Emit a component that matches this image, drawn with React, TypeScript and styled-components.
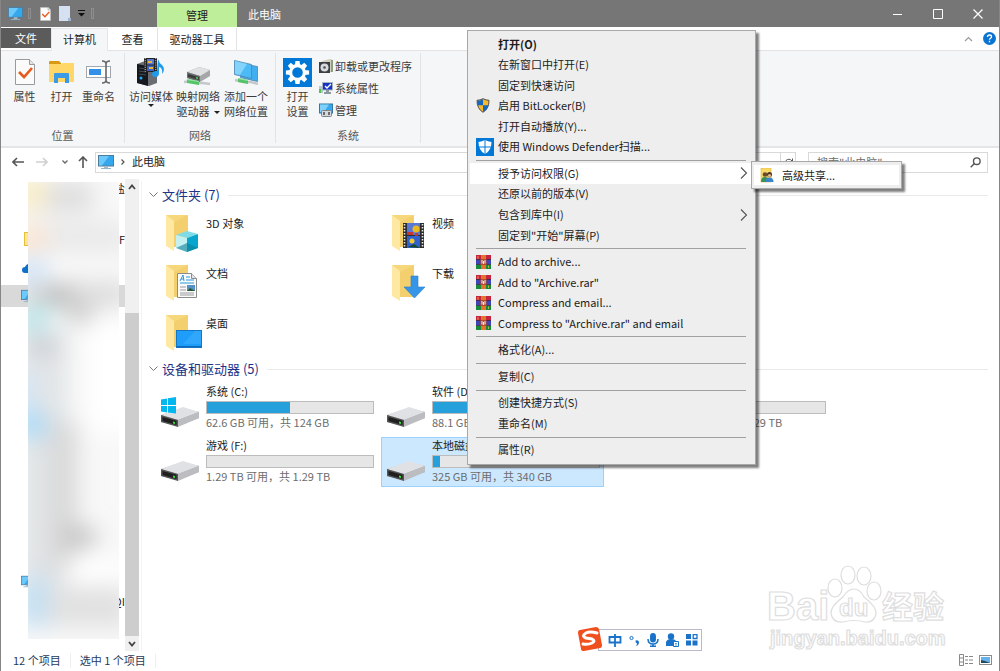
import React from "react";
import styled, { createGlobalStyle, css } from "styled-components";

const Global = createGlobalStyle`
  * { box-sizing: border-box; }
  html, body { margin: 0; padding: 0; background: #fff; }
  body, button, input { font-family: "Noto Sans CJK SC", sans-serif; font-size: 11px; line-height: 15px; color: #1b1b1b; }
  button { border: 0; background: none; padding: 0; margin: 0; white-space: nowrap; }
  svg { display: block; flex: none; }
  ul { list-style: none; margin: 0; padding: 0; }
`;

/* ---------- shell ---------- */
const Window = styled.div`
  position: relative;
  min-height: 100vh;
  display: flex;
  flex-direction: column;
  border: 1px solid #868686;
  border-top: 0;
  overflow: hidden;
`;
const TitleBar = styled.header`
  height: 27px;
  background: #767676;
  display: flex;
  align-items: stretch;
`;
const QuickAccess = styled.div`
  width: 156px;
  padding-left: 7px;
  display: flex;
  align-items: center;
  gap: 5px;
`;
const QuickDivider = styled.span`
  width: 3px;
  height: 11px;
  border: 1px solid #8f8f8f;
`;
const IconButton = styled.button<{ $w?: number }>`
  width: ${(p) => p.$w ?? 16}px;
  display: flex;
  align-items: center;
  justify-content: center;
`;
const ContextTab = styled.div`
  width: 80px;
  margin-top: 3px;
  padding-top: 1px;
  background: #bfee9a;
  display: flex;
  align-items: center;
  justify-content: center;
`;
const Title = styled.h1`
  margin: 0 auto 0 11px;
  font-size: 11px;
  line-height: 28px;
  font-weight: 400;
  color: #fff;
`;
const WindowButtons = styled.div`
  display: flex;
  padding-right: 1px;
`;

const TabRow = styled.nav`
  height: 24px;
  display: flex;
  align-items: stretch;
  border-bottom: 1px solid #e2e3e4;
`;
const Tab = styled.button<{ $kind?: "file" | "active" | "context"; $w: number }>`
  width: ${(p) => p.$w}px;
  height: 22px;
  margin-top: 1px;
  ${(p) => p.$kind === "file" && css`height: 20px; background: #5b5b5b; color: #fff;`}
  ${(p) =>
    p.$kind === "active" &&
    css`height: 24px; margin-bottom: -1px; padding-bottom: 2px; background: #f5f6f7; border: 1px solid #e6e7e8; border-bottom: 0;`}
  ${(p) => p.$kind === "context" && css`border: solid #e3e3e3; border-width: 0 1px;`}
`;
const TabTools = styled.div`
  margin-left: auto;
  display: flex;
  align-items: center;
  gap: 9px;
  padding-right: 3px;
`;

const Ribbon = styled.section`
  height: 97px;
  background: #f5f6f7;
  border-bottom: 2px solid #e4e5e7;
  display: flex;
  padding: 2px 0 3px;
`;
const RibbonGroup = styled.div<{ $w: number }>`
  width: ${(p) => p.$w}px;
  border-right: 1px solid #e2e3e4;
  display: flex;
  flex-direction: column;
  justify-content: space-between;
`;
const RibbonBody = styled.div<{ $left: number }>`
  display: flex;
  align-items: flex-start;
  padding: 4px 0 0 ${(p) => p.$left}px;
`;
const GroupLabel = styled.div`
  text-align: center;
  color: #5a5a5a;
`;
const BigButton = styled.button<{ $w: number }>`
  width: ${(p) => p.$w}px;
  display: flex;
  flex-direction: column;
  align-items: center;
  gap: 2px;
  color: #3c3c3c;
`;
const BigIcon = styled.span`
  height: 30px;
  display: flex;
  align-items: center;
`;
const BigText = styled.span`
  display: flex;
  flex-direction: column;
  align-items: center;
`;
const Caret = styled.i<{ $inline?: boolean }>`
  display: inline-block;
  border: 3px solid transparent;
  border-top-color: #222;
  border-bottom: 0;
  ${(p) => (p.$inline ? "margin: 0 0 2px 4px; vertical-align: middle;" : "")}
`;
const SmallList = styled.div`
  display: flex;
  flex-direction: column;
  gap: 4px;
  padding: 0 0 0 7px;
`;
const SmallButton = styled.button`
  height: 18px;
  display: flex;
  align-items: center;
  gap: 2px;
  color: #3c3c3c;
`;

const AddressRow = styled.div`
  height: 33px;
  display: flex;
  align-items: center;
  padding: 0 11px 5px 9px;
`;
const NavButtons = styled.div`
  width: 85px;
  display: flex;
  justify-content: space-between;
  align-items: center;
  padding-right: 2px;
`;
const AddressBox = styled.div`
  flex: 1;
  height: 21px;
  border: 1px solid #d9d9d9;
  display: flex;
  align-items: stretch;
`;
const Crumb = styled.div`
  flex: 1;
  display: flex;
  align-items: center;
  gap: 7px;
  padding: 0 0 1px 2px;
`;
const AddressButton = styled.button`
  width: 15px;
  border-left: 1px solid #d9d9d9;
  display: flex;
  align-items: center;
  justify-content: center;
`;
const SearchBox = styled.label`
  width: 180px;
  height: 21px;
  margin-left: 12px;
  border: 1px solid #d9d9d9;
  display: flex;
  align-items: center;
  padding: 0 6px 0 8px;
  input { flex: 1; min-width: 0; border: 0; padding: 0; outline: 0; background: none; }
  input::placeholder { color: #6d6d6d; }
`;

/* ---------- body ---------- */
const Body = styled.div`
  flex: 1;
  display: flex;
  min-height: 470px;
`;
const Sidebar = styled.aside`
  position: relative;
  width: 124px;
  overflow: hidden;
`;
const Tree = styled.ul`
  display: flex;
  flex-direction: column;
`;
const TreeItem = styled.li<{ $selected?: boolean; $h: number }>`
  height: ${(p) => p.$h}px;
  display: flex;
  align-items: center;
  justify-content: space-between;
  padding-left: 20px;
  background: ${(p) => (p.$selected ? "#d9d9d9" : "transparent")};
`;
const Mosaic = styled.div`
  position: absolute;
  left: 27px;
  top: 1px;
  bottom: 12px;
  width: 91px;
  overflow: hidden;
  svg { width: 100%; height: 100%; }
`;
const Scrollbar = styled.div`
  width: 14px;
  display: flex;
  flex-direction: column;
  background: #f0f0f0;
  margin-top: -2px;
  button { height: 15px; display: flex; align-items: center; justify-content: center; }
`;
const Thumb = styled.div`
  flex: 1;
  margin-top: 119px;
  background: #cdcdcd;
`;
const Content = styled.main`
  flex: 1;
  min-width: 0;
  margin-left: 2px;
  border-left: 1px solid #f3f3f3;
  padding: 0 11px 0 7px;
`;
const Group = styled.section`
  padding-top: 2px;
`;
const GroupHead = styled.h2`
  height: 24px;
  margin: 0 0 2px;
  display: flex;
  align-items: center;
  gap: 4px;
  font-size: 13px;
  line-height: 20px;
  font-weight: 400;
  color: #1e3287;
  &::after { content: ""; flex: 1; height: 1px; margin: 0 0 0 4px; background: #e9e9e9; }
`;
const Grid = styled.ul`
  display: grid;
  grid-template-columns: repeat(auto-fill, 223px);
  gap: 4px 3px;
  padding-left: 6px;
`;
const FolderTile = styled.li`
  height: 46px;
  padding: 5px 0 0 10px;
  display: flex;
  gap: 3px;
  span { padding-top: 2px; }
`;
const DriveTile = styled.li<{ $selected?: boolean }>`
  height: 50px;
  padding: 0 3px 0 5px;
  display: flex;
  gap: 6px;
  border: 1px solid ${(p) => (p.$selected ? "#99d1ff" : "transparent")};
  background: ${(p) => (p.$selected ? "#cce8ff" : "transparent")};
`;
const DriveInfo = styled.div`
  flex: 1;
  min-width: 0;
  white-space: nowrap;
`;
const Bar = styled.div`
  width: 168px;
  height: 13px;
  margin: 2px 0 1px;
  border: 1px solid #bcbcbc;
  background: #e6e6e6;
`;
const Fill = styled.div`
  height: 100%;
  background: #26a0da;
`;
const Muted = styled.div`
  color: #6d6d6d;
`;

const StatusBar = styled.footer`
  height: 20px;
  display: flex;
  align-items: center;
  padding: 0 7px 2px 12px;
  color: #1e395b;
`;
const StatusText = styled.span`
  padding-right: 9px;
  margin-right: 9px;
  border-right: 1px solid #f0f0f0;
`;
const ViewButtons = styled.div`
  margin-left: auto;
  display: flex;
  gap: 6px;
`;

/* ---------- floating layers ---------- */
const popup = css`
  position: absolute;
  display: flex;
  flex-direction: column;
  border: 1px solid #a8a8a8;
  background: #eeeeee;
  box-shadow: 3px 3px 2px rgba(0, 0, 0, 0.5);
`;
const ContextMenu = styled.div`
  ${popup}
  left: 466px;
  top: 30px;
  width: 289px;
  height: 435px;
  padding: 3px 2px 4px;
`;
const SubMenu = styled.div`
  ${popup}
  left: 750px;
  top: 161px;
  width: 151px;
  padding: 3px 2px;
`;
const MenuItem = styled.button<{ $active?: boolean; $bold?: boolean }>`
  flex: 1 1 20px;
  min-height: 20px;
  display: grid;
  grid-template-columns: 28px 1fr 13px;
  align-items: center;
  text-align: left;
  font-weight: ${(p) => (p.$bold ? 700 : 400)};
  background: ${(p) => (p.$active ? "#fff" : "transparent")};
`;
const MenuIcon = styled.span`
  display: flex;
  padding-left: 6px;
  height: 18px;
  align-items: center;
`;
const Rule = styled.hr`
  width: auto;
  height: 1px;
  border: 0;
  margin: 3px 7px 2px 6px;
  background: #a0a0a0;
`;
const ImeBar = styled.div`
  position: absolute;
  left: 597px;
  top: 629px;
  width: 104px;
  height: 22px;
  border: 1px solid #b9bcc8;
  background: #fff;
  display: flex;
  align-items: center;
  justify-content: space-between;
  padding: 0 3px 0 9px;
  color: #1a73c8;
`;
const ImeLogo = styled.div`
  position: absolute;
  left: -23px;
  top: -4px;
`;
const Watermark = styled.div`
  position: absolute;
  right: 48px;
  bottom: 14px;
`;

/* ---------- icons ---------- */
const Monitor = ({ w = 16 }: { w?: number }) => (
  <svg width={w} height={w} viewBox="0 0 16 16">
    <rect x="0.5" y="1.5" width="15" height="10.5" fill="#35a7ec" stroke="#4e7d9c" />
    <path d="M1 2h10L4 11.5H1z" fill="#6cc9fb" />
    <path d="M6 12h4v2H6z" fill="#a9bac5" />
    <path d="M3 14h10v1H3z" fill="#8fb4cb" />
  </svg>
);
const CheckDoc = ({ w, h }: { w: number; h: number }) => (
  <svg width={w} height={h} viewBox="0 0 20 26" preserveAspectRatio="none">
    <path d="M.5.5h14l5 5v20H.5z" fill="#fbfbfb" stroke="#9a9a9a" />
    <path d="M14.500 .5v5h5" fill="#e4e4e4" stroke="#9a9a9a" />
    <path d="M4 13l5 5 8-9" fill="none" stroke="#e8591c" strokeWidth="2.600" />
  </svg>
);
const OpenFolder = () => (
  <svg width="26" height="26" viewBox="0 0 26 26">
    <path d="M0 3q0-1 1-1h9l2 2v2H0z" fill="#d79a12" />
    <path d="M0 5h12l2-1h11v19H0z" fill="#ffd766" />
    <path d="M5 24v-9q0-1 1-1h13q1 0 1 1v9h-4v-5H9v5z" fill="#3c9be6" />
  </svg>
);
const RenameIcon = () => (
  <svg width="26" height="26" viewBox="0 0 26 26" fill="none">
    <rect x=".5" y="7.500" width="24" height="11" fill="#fff" stroke="#a0a7ae" />
    <rect x="3" y="10" width="12" height="6" fill="#3390e8" />
    <path d="M16 2q4 0 4 3v16q0 3-4 3M24 2q-4 0-4 3v16q0 3 4 3" stroke="#666" strokeWidth="1.600" />
  </svg>
);
const MediaIcon = () => (
  <svg width="28" height="28" viewBox="0 0 28 28">
    <path d="M0 6l8-3 12 2v20l-8 3L0 25z" fill="#6a6d72" />
    <path d="M0 6l11 2v20L0 25z" fill="#15181c" />
    <path d="M2 10l7 1M2 13l7 1M2 16l7 1" stroke="#454a52" />
    <circle cx="4" cy="20" r="1.500" fill="#27a5f5" />
    <rect x="7" y="0" width="13" height="14" fill="#222" />
    <path d="M8.200 0v14M18.800 0v14" stroke="#ddd" strokeDasharray="1 1.200" />
    <rect x="10" y="1" width="7" height="5.500" fill="#5a77d6" />
    <rect x="10" y="7.500" width="7" height="5.500" fill="#3b62c8" />
    <path d="M11 3h4v2h-4zM12 9h4v2h-4z" fill="#e9b62f" />
    <path d="M21 1q1 4 4 6 4 4 0 9 1-6-3-7v6q0 4-3.500 4-3.500 0-3.500-3t5-3z" fill="#1f9bea" />
  </svg>
);
const NetDriveIcon = () => (
  <svg width="28" height="28" viewBox="0 0 28 28">
    <path d="M0 24l8-1 4 2h7l7 1" stroke="#c3c8cb" strokeWidth="2.400" fill="none" />
    <path d="M3 14L15 9l11 3v6l-10 6-13-4z" fill="#a4a6a8" />
    <path d="M3 14L15 9l11 3-10 6z" fill="#dfe1e2" />
    <path d="M3 14l13 4v6L3 20z" fill="#6d7072" />
    <path d="M4 16l11 3v3L4 19z" fill="#3a3c3e" />
    <path d="M12 19l2 .6v1.400l-2-.6z" fill="#4be04b" />
    <path d="M3 21l12 2v4L3 25z" fill="#55c468" />
    <path d="M3 21l12 2v1L3 22z" fill="#9be3a6" />
  </svg>
);
const AddPlaceIcon = () => (
  <svg width="26" height="26" viewBox="0 0 26 26">
    <path d="M2 21l8 2h8l7 2" stroke="#c3c8cb" strokeWidth="2.400" fill="none" />
    <path d="M7.500 4.500l17 3v15l-17-4z" fill="#41aef0" stroke="#4b86ae" strokeWidth=".8" />
    <path d="M1.500 1.500l17 4v14l-17-4z" fill="#4dbaf8" stroke="#4b86ae" strokeWidth=".8" />
    <path d="M2 2l12 3-7 11-5-1.200z" fill="#83d3fb" />
    <path d="M5 19l10 2v4L5 23z" fill="#55c468" />
    <path d="M5 19l10 2v1L5 20z" fill="#9be3a6" />
  </svg>
);
const Gear = () => {
  const teeth = [0, 45, 90, 135, 180, 225, 270, 315];
  return (
    <svg width="29" height="29" viewBox="0 0 28 28">
      <rect width="28" height="28" fill="#0078d7" />
      <g transform="translate(14 14)" fill="#fff">
        {teeth.map((a) => (
          <path key={a} d="M-2.500 -7L-2 -11.200h4l.5 4.200z" transform={`rotate(${a})`} />
        ))}
        <circle r="6.600" fill="none" stroke="#fff" strokeWidth="3" />
      </g>
    </svg>
  );
};
const ProgramsIcon = () => (
  <svg width="14" height="14" viewBox="0 0 14 14">
    <path d="M3 2l8-2 3 1v12H3z" fill="#d3cfc0" />
    <path d="M12 1h2v12h-2z" fill="#8aa27b" />
    <rect x="0" y="3" width="11" height="11" fill="#3c3f42" />
    <circle cx="5.500" cy="8.500" r="4" fill="#d7dadc" />
    <circle cx="5.500" cy="8.500" r="1.300" fill="#4a4d50" />
  </svg>
);
const SystemIcon = () => (
  <svg width="14" height="14" viewBox="0 0 14 14">
    <path d="M0 5h4v7H0z" fill="#b6c5cf" />
    <path d="M0 8h2v4H0z" fill="#56c04d" />
    <rect x="3.500" y="1.500" width="10" height="7.500" fill="#1632c8" stroke="#a8b4be" />
    <path d="M6 5l2 2 4-4" stroke="#fff" fill="none" strokeWidth="1.400" />
    <path d="M7 9h3v2h2v2H5v-2h2z" fill="#8d979e" />
  </svg>
);
const ManageIcon = () => (
  <svg width="14" height="14" viewBox="0 0 14 14">
    <rect x=".5" y="1" width="13" height="9" fill="#36a8ef" stroke="#35789f" />
    <path d="M1 1.500h9L5 9H1z" fill="#7fd0fa" />
    <rect x="2.500" y="7.500" width="10" height="6" rx="1" fill="#d3d8dc" stroke="#7d858b" />
    <path d="M5 9v3M10 9v3" stroke="#333" strokeWidth="1.300" />
  </svg>
);
const FolderIcon = ({ children }: { children?: React.ReactNode }) => (
  <svg width="38" height="40" viewBox="0 0 38 40">
    <path d="M1 1h22v32l-14 0z" fill="#f6d77c" />
    <path d="M9 8L23 1v32H9z" fill="#f3cf6d" />
    <path d="M1 1l8 6v30l-8-5z" fill="#ffe8a2" />
    {children}
  </svg>
);
const Cube = () => (
  <g>
    <path d="M11 21l11-4 11 3-11 4z" fill="#7edce6" />
    <path d="M11 21l11 3v14l-11-4z" fill="#c5f0f2" />
    <path d="M22 24l11-4v14l-11 4z" fill="#08a5cf" />
    <path d="M11 34l11-5 11 5-11 4z" fill="#0a7f96" opacity=".6" />
  </g>
);
const FilmArt = () => (
  <g>
    <rect x="12" y="9" width="21" height="25" fill="#2c2c2c" />
    <path d="M13.500 10v24M31.500 10v24" stroke="#e8e8e8" strokeWidth="1.600" strokeDasharray="1.500 1.500" />
    <rect x="16" y="9" width="13" height="12" fill="#5878d8" />
    <rect x="16" y="22" width="13" height="12" fill="#2f62cf" />
    <circle cx="25" cy="15" r="3.500" fill="#e9b91f" />
    <path d="M24 19h3v3h-3zM16 18h6v3h-6z" fill="#c6362f" />
    <circle cx="21" cy="27" r="2.500" fill="#f0cc30" />
    <path d="M17 33l6-3 6 4z" fill="#184a2c" />
  </g>
);
const PaperArt = () => (
  <g>
    <path d="M12.500 9.500h14l5 5v19h-19z" fill="#fafafa" stroke="#8c8c8c" />
    <path d="M26.500 9.500v5h5" fill="#e2e2e2" stroke="#8c8c8c" />
    <path d="M15 17l3-6 1 6M16 15h3M21 13h4M21 16h8M15 19h14" stroke="#2a9ad8" fill="none" />
    <path d="M15 23h6M15 26h6M15 29h14M15 31h14" stroke="#9a9a9a" />
    <rect x="22" y="21" width="8" height="6" fill="#5591c8" />
    <path d="M22 27l3-3 5 3z" fill="#27582f" />
  </g>
);
const ArrowArt = () => <path d="M20 12h7v11h7L23.500 34 13 23h7z" fill="#3795e8" stroke="#2a7fce" strokeWidth=".6" />;
const DesktopArt = () => (
  <g>
    <rect x="11.500" y="16.500" width="25" height="17" fill="#1e9dfa" stroke="#1476c4" />
    <path d="M30 17h6v13h-18z" fill="#3caeff" opacity=".6" />
    <path d="M12 32.500h24" stroke="#0e68b4" />
  </g>
);
const NoteArt = () => <path d="M21 13l11 3v4l-8-2v12q0 4-4 4t-4-3q0-4 5-4z" fill="#1f9bea" />;
const PictureArt = () => (
  <g>
    <rect x="11.500" y="14.500" width="23" height="18" fill="#8cc9f3" stroke="#e5e5e5" />
    <path d="M12 32l8-9 6 5 3-2 5 6z" fill="#2f7e55" />
  </g>
);
const DriveIcon = ({ system }: { system?: boolean }) => (
  <svg width="39" height="46" viewBox="0 0 39 46">
    <path d="M0 31l22-7 16 4v6L17 42 0 38z" fill="#a9abad" />
    <path d="M0 31l22-8 16 5-21 8z" fill="#e0e1e4" />
    <path d="M17 36l21-8v6L17 43z" fill="#bbbdc0" />
    <path d="M0 31l17 5v7L0 38z" fill="#555" />
    <path d="M1.500 33l14 3.800v4.200l-14-4z" fill="#1f1f1f" />
    <path d="M12 37.500l2 .5v2l-2-.5z" fill="#38e338" />
    {system && (
      <path d="M0 15.500l6-1v6.500H0zM7 14.300l8-1.300v8H7zM0 22h6v6.500l-6-1zM7 22h8v7.500l-8-1z" fill="#00b7f0" />
    )}
  </svg>
);
const Shield = () => (
  <svg width="14" height="15" viewBox="0 0 14 15">
    <path d="M7 .7q3 1.600 6 1.600 0 8.500-6 12-6-3.500-6-12 3 0 6-1.600z" fill="#f7b92c" stroke="#4d4d4d" />
    <path d="M7 1.200v6H1.400q-.2-2-.1-4.500 3 0 5.700-1.500zM7 7.200h5.600q-1 4.500-5.600 6.600z" fill="#1566bd" />
  </svg>
);
const Defender = () => (
  <svg width="18" height="18" viewBox="0 0 18 18">
    <rect width="18" height="18" fill="#0078d7" />
    <path d="M9 2q3 1.800 6.500 1.900 0 8.500-6.500 12.100Q2.500 12.400 2.500 3.900 6 3.800 9 2z" fill="#fff" />
    <path d="M9 2v14M2.500 9h13" stroke="#0078d7" />
  </svg>
);
const Rar = () => (
  <svg width="15" height="14" viewBox="0 0 15 14">
    <rect width="15" height="5" fill="#c4243f" />
    <rect y="4.500" width="15" height="5" fill="#3d46b4" />
    <rect y="9.500" width="15" height="4.500" fill="#16893b" />
    <path d="M0 4.500h15M0 9.500h15" stroke="#33203a" strokeWidth=".7" />
    <rect x="5" width="5" height="14" fill="#e2742c" />
    <rect x="4.500" y="4" width="6" height="6" fill="#b9482a" />
    <path d="M6 5v3.500M7.500 6v3M9 5v3.500" stroke="#fff" strokeWidth=".9" />
    <path d="M2 1v3M12.500 10.500V13" stroke="#f3c94f" strokeWidth=".7" />
  </svg>
);
const ShareIcon = () => (
  <svg width="14" height="15" viewBox="0 0 14 15">
    <rect x="1" width="10" height="14" fill="#f8d966" stroke="#dfb640" strokeWidth=".6" />
    <circle cx="5" cy="6.500" r="2.300" fill="#6a4a2c" />
    <path d="M1 14q0-5 4-5t4 5z" fill="#3c8f55" />
    <circle cx="9.500" cy="6.500" r="2.500" fill="#4a3524" />
    <circle cx="9.500" cy="7.500" r="1.600" fill="#e7b888" />
    <path d="M5.500 14q0-4.500 4-4.500t4 4.500z" fill="#3a85cf" />
  </svg>
);
const Chevron = ({ d, w, h, color, sw = 1 }: { d: string; w: number; h: number; color: string; sw?: number }) => (
  <svg width={w} height={h} viewBox={`0 0 ${w} ${h}`} fill="none" stroke={color} strokeWidth={sw}>
    <path d={d} />
  </svg>
);

/* ---------- data ---------- */
const folders = [
  { name: "3D 对象", art: <Cube /> },
  { name: "视频", art: <FilmArt /> },
  { name: "图片", art: <PictureArt /> },
  { name: "文档", art: <PaperArt /> },
  { name: "下载", art: <ArrowArt /> },
  { name: "音乐", art: <NoteArt /> },
  { name: "桌面", art: <DesktopArt /> },
];
const drives = [
  { name: "系统 (C:)", used: 50, info: "62.6 GB 可用，共 124 GB", system: true },
  { name: "软件 (D:)", used: 40, info: "88.1 GB 可用，共 146 GB" },
  { name: "文件 (E:)", used: 0, info: "1.29 TB 可用，共 1.29 TB" },
  { name: "游戏 (F:)", used: 0, info: "1.29 TB 可用，共 1.29 TB" },
  { name: "本地磁盘 (G:)", used: 4, info: "325 GB 可用，共 340 GB", selected: true },
];
type Entry = { label: string; icon?: React.ReactNode; bold?: boolean; sub?: boolean; active?: boolean } | "rule";
const menu: Entry[] = [
  { label: "打开(O)", bold: true },
  { label: "在新窗口中打开(E)" },
  { label: "固定到快速访问" },
  { label: "启用 BitLocker(B)", icon: <Shield /> },
  { label: "打开自动播放(Y)..." },
  { label: "使用 Windows Defender扫描...", icon: <Defender /> },
  "rule",
  { label: "授予访问权限(G)", sub: true, active: true },
  { label: "还原以前的版本(V)" },
  { label: "包含到库中(I)", sub: true },
  { label: "固定到\"开始\"屏幕(P)" },
  "rule",
  { label: "Add to archive...", icon: <Rar /> },
  { label: "Add to \"Archive.rar\"", icon: <Rar /> },
  { label: "Compress and email...", icon: <Rar /> },
  { label: "Compress to \"Archive.rar\" and email", icon: <Rar /> },
  "rule",
  { label: "格式化(A)..." },
  "rule",
  { label: "复制(C)" },
  "rule",
  { label: "创建快捷方式(S)" },
  { label: "重命名(M)" },
  "rule",
  { label: "属性(R)" },
];

export default function App() {
  return (
    <>
      <Global />
      <Window>
        <TitleBar>
          <QuickAccess>
            <Monitor w={15} />
            <QuickDivider />
            <IconButton aria-label="属性" $w={18}><CheckDoc w={11} h={14} /></IconButton>
            <IconButton aria-label="新建文件夹" $w={12}>
              <svg width="12" height="15" viewBox="0 0 12 15">
                <path d="M0 0h11v12l-2 3H0z" fill="#d5e1f1" />
                <path d="M9 12h3v3H9z" fill="#9fb4d0" />
              </svg>
            </IconButton>
            <IconButton aria-label="自定义快速访问工具栏" $w={10}>
              <svg width="7" height="7" viewBox="0 0 7 7"><path d="M0 0h7v1H0zM0 3h7L3.500 6.500z" fill="#111" /></svg>
            </IconButton>
            <QuickDivider />
          </QuickAccess>
          <ContextTab>管理</ContextTab>
          <Title>此电脑</Title>
          <WindowButtons>
            <IconButton aria-label="最小化" $w={40}>
              <Chevron w={10} h={10} d="M0 5.500h9" color="#fff" />
            </IconButton>
            <IconButton aria-label="最大化" $w={40}>
              <Chevron w={10} h={10} d="M.5 .5h9v9h-9z" color="#fff" />
            </IconButton>
            <IconButton aria-label="关闭" $w={40}>
              <Chevron w={10} h={10} d="M.5 .5l9 9M9.500 .5l-9 9" color="#fff" sw={1.2} />
            </IconButton>
          </WindowButtons>
        </TitleBar>

        <TabRow>
          <Tab $w={50} $kind="file">文件</Tab>
          <Tab $w={57} $kind="active">计算机</Tab>
          <Tab $w={49}>查看</Tab>
          <Tab $w={80} $kind="context">驱动器工具</Tab>
          <TabTools>
            <IconButton aria-label="折叠功能区" $w={10}>
              <Chevron w={9} h={6} d="M1 5l3.500-3.500L8 5" color="#9a9a9a" sw={1.2} />
            </IconButton>
            <IconButton aria-label="帮助" $w={14}>
              <svg width="13" height="13" viewBox="0 0 13 13">
                <circle cx="6.500" cy="6.500" r="6.500" fill="#0a74d0" />
                <path d="M4.500 5q0-2 2-2t2 1.700q0 1-1 1.600t-1 1.400M6.500 8.800v1.400" stroke="#fff" strokeWidth="1.300" fill="none" />
              </svg>
            </IconButton>
          </TabTools>
        </TabRow>

        <Ribbon>
          <RibbonGroup $w={124}>
            <RibbonBody $left={5}>
              <BigButton $w={37}><BigIcon><CheckDoc w={20} h={26} /></BigIcon>属性</BigButton>
              <BigButton $w={37}><BigIcon><OpenFolder /></BigIcon>打开</BigButton>
              <BigButton $w={37}><BigIcon><RenameIcon /></BigIcon>重命名</BigButton>
            </RibbonBody>
            <GroupLabel>位置</GroupLabel>
          </RibbonGroup>
          <RibbonGroup $w={151}>
            <RibbonBody $left={3}>
              <BigButton $w={46}>
                <BigIcon><MediaIcon /></BigIcon>
                <BigText>访问媒体<Caret /></BigText>
              </BigButton>
              <BigButton $w={48}>
                <BigIcon><NetDriveIcon /></BigIcon>
                <BigText><span>映射网络</span><span>驱动器<Caret $inline /></span></BigText>
              </BigButton>
              <BigButton $w={48}>
                <BigIcon><AddPlaceIcon /></BigIcon>
                <BigText><span>添加一个</span><span>网络位置</span></BigText>
              </BigButton>
            </RibbonBody>
            <GroupLabel>网络</GroupLabel>
          </RibbonGroup>
          <RibbonGroup $w={145}>
            <RibbonBody $left={7}>
              <BigButton $w={29}>
                <BigIcon><Gear /></BigIcon>
                <BigText><span>打开</span><span>设置</span></BigText>
              </BigButton>
              <SmallList>
                <SmallButton><ProgramsIcon />卸载或更改程序</SmallButton>
                <SmallButton><SystemIcon />系统属性</SmallButton>
                <SmallButton><ManageIcon />管理</SmallButton>
              </SmallList>
            </RibbonBody>
            <GroupLabel>系统</GroupLabel>
          </RibbonGroup>
        </Ribbon>

        <AddressRow>
          <NavButtons>
            <IconButton aria-label="后退"><Chevron w={12} h={10} d="M1 5h11M5 1L1 5l4 4" color="#555" sw={1.6} /></IconButton>
            <IconButton aria-label="前进" $w={28}><Chevron w={12} h={10} d="M0 5h11M7 1l4 4-4 4" color="#d0d0d0" sw={1.6} /></IconButton>
            <IconButton aria-label="最近位置" $w={12}><Chevron w={6} h={4} d="M.5 .5L3 3 5.500 .5" color="#666" sw={1.3} /></IconButton>
            <IconButton aria-label="向上" $w={20}><Chevron w={10} h={12} d="M5 12V1M1 5l4-4 4 4" color="#555" sw={1.6} /></IconButton>
          </NavButtons>
          <AddressBox>
            <Crumb>
              <Monitor w={16} />
              <Chevron w={4} h={6} d="M.5 .5L3 3 .5 5.500" color="#555" sw={1.2} />
              <span>此电脑</span>
            </Crumb>
            <IconButton aria-label="展开地址"><Chevron w={8} h={5} d="M1 1l3 3 3-3" color="#777" /></IconButton>
            <AddressButton aria-label="刷新"><Chevron w={9} h={9} d="M8 3A3.800 3.800 0 1 0 8.500 6M8.500 .5V3.500H5.500" color="#555" /></AddressButton>
          </AddressBox>
          <SearchBox>
            <input aria-label="搜索" placeholder={"搜索\"此电脑\""} />
            <svg width="11" height="11" viewBox="0 0 11 11" fill="none" stroke="#555" strokeWidth="1.400">
              <circle cx="6.800" cy="4.200" r="3.300" />
              <path d="M4.400 6.600L.7 10.300" />
            </svg>
          </SearchBox>
        </AddressRow>

        <Body>
          <Sidebar>
            <Tree>
              <TreeItem $h={14}><span /><span>盐</span></TreeItem>
              <TreeItem $h={32} />
              <TreeItem $h={24}>
                <svg width="12" height="14" viewBox="0 0 12 14"><rect x="3.500" y=".5" width="8" height="13" fill="#ffe596" stroke="#e9bf3a" /></svg>
                <span>F</span>
              </TreeItem>
              <TreeItem $h={34}>
                <svg width="14" height="10" viewBox="0 0 14 10"><path d="M1 7q0-3 3-3 2-4 6-3l3 9H4Q1 10 1 7z" fill="#0f6fc9" /></svg>
              </TreeItem>
              <TreeItem $h={22} $selected><Monitor w={14} /></TreeItem>
              <TreeItem $h={263} />
              <TreeItem $h={22}><Monitor w={13} /></TreeItem>
              <TreeItem $h={18}><span /><span>QI</span></TreeItem>
            </Tree>
            <Mosaic>
              <svg viewBox="0 0 91 457" preserveAspectRatio="none">
                <defs>
                  <filter id="soft" x="-50%" y="-50%" width="200%" height="200%"><feGaussianBlur stdDeviation="11" /></filter>
                </defs>
                <rect width="91" height="457" fill="#f8f8f8" />
                <g filter="url(#soft)">
                  <rect x="-10" y="0" width="75" height="30" fill="#dedede" />
                  <rect x="-12" y="-5" width="30" height="32" fill="#fbefc8" />
                  <rect x="10" y="40" width="90" height="30" fill="#e9e9e9" />
                  <rect x="-12" y="45" width="30" height="25" fill="#fce3cd" />
                  <rect x="-10" y="75" width="28" height="24" fill="#cfe5fb" />
                  <rect x="-10" y="100" width="110" height="24" fill="#dcdcdc" />
                  <rect x="15" y="104" width="30" height="20" fill="#b9b9b9" />
                  <rect x="-10" y="122" width="32" height="28" fill="#bfe6ea" />
                  <rect x="38" y="122" width="28" height="20" fill="#cfcfcf" />
                  <rect x="-10" y="150" width="50" height="290" fill="#e2e5e7" />
                  <rect x="0" y="155" width="30" height="18" fill="#cbcdd3" />
                  <rect x="-14" y="190" width="20" height="50" fill="#cfe4f6" />
                  <rect x="-10" y="230" width="28" height="26" fill="#a6daf7" />
                  <rect x="20" y="240" width="30" height="150" fill="#d9d9d9" />
                  <rect x="60" y="140" width="50" height="110" fill="#fff" />
                  <rect x="34" y="345" width="34" height="20" fill="#c4c4c4" />
                  <rect x="40" y="378" width="60" height="20" fill="#fff" />
                  <rect x="20" y="405" width="80" height="40" fill="#e1e1e1" />
                  <rect x="-6" y="395" width="26" height="50" fill="#c2e0f3" />
                </g>
              </svg>
            </Mosaic>
          </Sidebar>
          <Scrollbar>
            <button aria-label="向上滚动"><Chevron w={8} h={6} d="M1 5l3-3.500L7 5" color="#444" sw={1.8} /></button>
            <Thumb />
            <button aria-label="向下滚动"><Chevron w={8} h={6} d="M1 1l3 3.500L7 1" color="#444" sw={1.8} /></button>
          </Scrollbar>
          <Content>
            <Group>
              <GroupHead><Chevron w={9} h={6} d="M.5 .5l4 4 4-4" color="#777" />文件夹 (7)</GroupHead>
              <Grid>
                {folders.map((f) => (
                  <FolderTile key={f.name}><FolderIcon>{f.art}</FolderIcon><span>{f.name}</span></FolderTile>
                ))}
              </Grid>
            </Group>
            <Group>
              <GroupHead><Chevron w={9} h={6} d="M.5 .5l4 4 4-4" color="#777" />设备和驱动器 (5)</GroupHead>
              <Grid>
                {drives.map((d) => (
                  <DriveTile key={d.name} $selected={d.selected}>
                    <DriveIcon system={d.system} />
                    <DriveInfo>
                      <div>{d.name}</div>
                      <Bar><Fill style={{ width: `${d.used}%` }} /></Bar>
                      <Muted>{d.info}</Muted>
                    </DriveInfo>
                  </DriveTile>
                ))}
              </Grid>
            </Group>
          </Content>
        </Body>

        <StatusBar>
          <StatusText>12 个项目</StatusText>
          <StatusText>选中 1 个项目</StatusText>
          <ViewButtons>
            <IconButton aria-label="详细信息" $w={14}>
              <svg width="14" height="12" viewBox="0 0 14 12" fill="none" stroke="#888">
                <path d="M.5 .5h4v11h-4zM.5 4h4M.5 8h4" />
                <path d="M6 2.500h3M10 2.500h4M6 6h3M10 6h4M6 9.500h3M10 9.500h4" />
              </svg>
            </IconButton>
            <IconButton aria-label="大图标" $w={13}>
              <svg width="13" height="10" viewBox="0 0 13 10">
                <rect x=".5" y=".5" width="12" height="9" fill="#fff" stroke="#8c8c8c" />
                <rect x="2" y="2" width="9" height="6" fill="#63b2ef" />
                <path d="M2 8V5l4 1 5 2z" fill="#27485a" />
              </svg>
            </IconButton>
          </ViewButtons>
        </StatusBar>

        <Watermark>
          <svg width="184" height="92" viewBox="0 0 184 92" fill="#fff" stroke="#dedede" strokeWidth="1.200">
            <ellipse cx="68" cy="23" rx="7" ry="9" />
            <ellipse cx="81" cy="10" rx="7" ry="9" />
            <ellipse cx="97" cy="11" rx="7" ry="9" />
            <ellipse cx="107" cy="26" rx="7" ry="9" />
            <path d="M87 24q6 0 10 8 13 10 12 17-2 9-11 8-11-3-22 0-10 1-12-8-1-7 12-17 5-8 11-8z" />
            <g fontFamily='"Liberation Sans", sans-serif' fontWeight="700">
              <text x="0" y="55" fontSize="40">Bai</text>
              <text x="72" y="51" fontSize="24">du</text>
              <text x="3" y="80" fontSize="20">jingyan.baidu.com</text>
            </g>
            <text x="115" y="53" fontSize="31" fontWeight="700" fontFamily='"Noto Sans CJK SC", sans-serif'>经验</text>
          </svg>
        </Watermark>

        <ImeBar>
          <ImeLogo>
            <svg width="27" height="27" viewBox="0 0 27 27">
              <path d="M4 4l16-3q2 0 3 2l3 16q0 3-2 3L8 25q-3 0-3-2L2 7q0-3 2-3z" fill="#f0501e" />
              <path d="M21 7q-7-2-11 0-5 3 0 5l6 1q4 2 0 4-4 2-9 1" fill="none" stroke="#fff" strokeWidth="3" strokeLinecap="round" />
            </svg>
          </ImeLogo>
          <svg width="14" height="13" viewBox="0 0 14 13" fill="none" stroke="#1a73c8" strokeWidth="1.800"><path d="M1.500 3h11v5.500h-11zM7 0v13" /></svg>
          <svg width="11" height="11" viewBox="0 0 11 11" fill="#1a73c8">
            <circle cx="2.500" cy="3" r="1.600" fill="none" stroke="#1a73c8" />
            <path d="M6.500 5.500q3-1 3.500 1.500 0 3-3 4 1-1.500 1-2.500-2-1-1.500-3z" />
          </svg>
          <svg width="12" height="14" viewBox="0 0 12 14" fill="none" stroke="#1a73c8" strokeWidth="1.500">
            <rect x="3.800" y=".8" width="4.400" height="8" rx="2.200" fill="#1a73c8" />
            <path d="M1 6q0 5 5 5t5-5M6 11v3M3 13.300h6" />
          </svg>
          <svg width="13" height="14" viewBox="0 0 13 14" fill="#1a73c8">
            <circle cx="5" cy="3.500" r="3.200" />
            <path d="M0 13V9q1-3 5-3t5 2v5z" />
            <path d="M7.500 8.500h5v5h-5z" fill="#fff" stroke="#1a73c8" />
            <path d="M9 10.500h2M9 12h2" stroke="#1a73c8" strokeWidth=".7" />
          </svg>
          <svg width="12" height="12" viewBox="0 0 12 12" fill="#1a73c8">
            <path d="M0 0h5v5H0zM0 6.500h5v5H0zM6.500 6.500h5v5h-5z" />
            <path d="M7.200 .7h3.800v3.800H7.200z" fill="none" stroke="#1a73c8" strokeWidth="1.300" />
          </svg>
        </ImeBar>

        <ContextMenu role="menu">
          {menu.map((m, i) =>
            m === "rule" ? (
              <Rule key={i} />
            ) : (
              <MenuItem key={i} role="menuitem" $active={m.active} $bold={m.bold}>
                <MenuIcon>{m.icon}</MenuIcon>
                <span>{m.label}</span>
                {m.sub && <Chevron w={8} h={12} d="M1 .5L6.500 6 1 11.500" color="#555" sw={1.1} />}
              </MenuItem>
            )
          )}
        </ContextMenu>
        <SubMenu role="menu">
          <MenuItem role="menuitem" $active>
            <MenuIcon><ShareIcon /></MenuIcon>
            <span>高级共享...</span>
          </MenuItem>
        </SubMenu>
      </Window>
    </>
  );
}
